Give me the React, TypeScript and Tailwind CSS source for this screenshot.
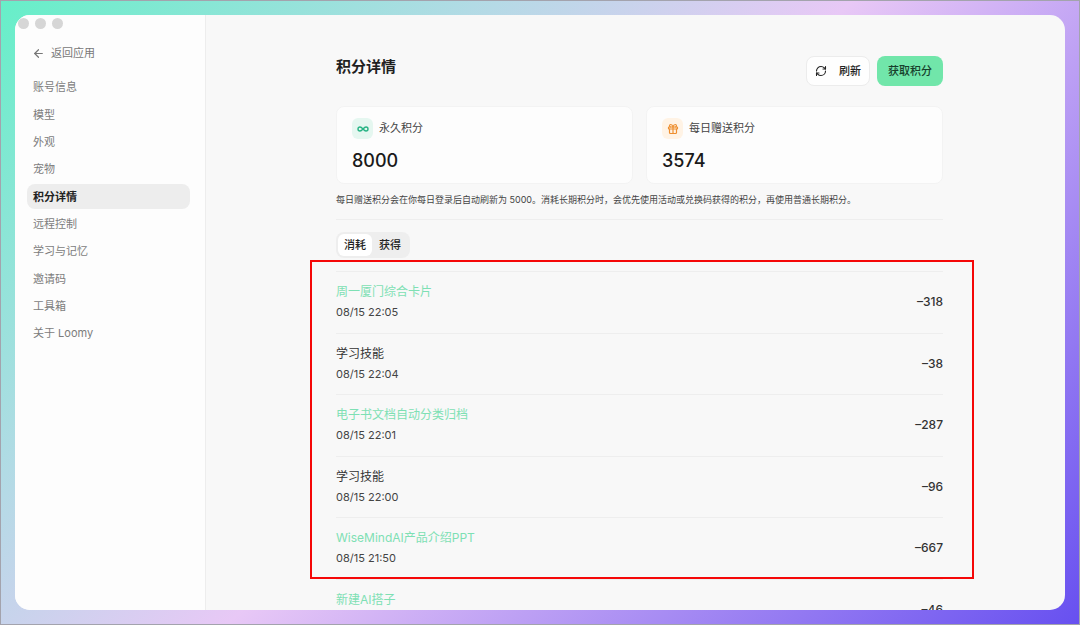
import React, { useState } from 'react';
import { ArrowLeft, Gift, Infinity as InfinityIcon, RefreshCw } from 'lucide-react';

interface PointRecord {
  id: number;
  title: string;
  time?: string;
  amount: string;
  linked: boolean;
}

const NAV_ITEMS = [
  '账号信息',
  '模型',
  '外观',
  '宠物',
  '积分详情',
  '远程控制',
  '学习与记忆',
  '邀请码',
  '工具箱',
  '关于 Loomy',
];

const RECORDS: PointRecord[] = [
  { id: 1, title: '周一厦门综合卡片', time: '08/15 22:05', amount: '–318', linked: true },
  { id: 2, title: '学习技能', time: '08/15 22:04', amount: '–38', linked: false },
  { id: 3, title: '电子书文档自动分类归档', time: '08/15 22:01', amount: '–287', linked: true },
  { id: 4, title: '学习技能', time: '08/15 22:00', amount: '–96', linked: false },
  { id: 5, title: 'WiseMindAI产品介绍PPT', time: '08/15 21:50', amount: '–667', linked: true },
  { id: 6, title: '新建AI搭子', amount: '–46', linked: true },
];

const Sidebar: React.FC = () => {
  const [active, setActive] = useState('积分详情');

  return (
    <aside className="w-[191px] shrink-0 border-r border-[#ededed] bg-[#fdfdfd]">
      <div className="flex gap-1.5 px-[3px] pt-[3px]">
        <span className="size-[11px] rounded-full bg-[#d6d6d6]" />
        <span className="size-[11px] rounded-full bg-[#d6d6d6]" />
        <span className="size-[11px] rounded-full bg-[#d6d6d6]" />
      </div>
      <a href="#" className="mt-4 ml-[17px] flex h-4 w-fit items-center gap-1.5 text-[11px] text-[#777]">
        <ArrowLeft size={13} strokeWidth={2.2} />
        返回应用
      </a>
      <nav className="mt-[14px] mr-[15px] ml-3 flex h-[271px] flex-col justify-between">
        {NAV_ITEMS.map((item) => (
          <button
            key={item}
            onClick={() => setActive(item)}
            className={`h-[25px] rounded-lg px-1.5 text-left text-[11px] ${
              active === item ? 'bg-[#ededed] font-bold text-[#222]' : 'text-[#7c7c7c]'
            }`}
          >
            {item}
          </button>
        ))}
      </nav>
    </aside>
  );
};

interface PointCardProps {
  label: string;
  value: string;
  icon: React.ReactNode;
  iconClass: string;
}

const PointCard: React.FC<PointCardProps> = ({ label, value, icon, iconClass }) => (
  <div className="h-[78px] rounded-lg border border-[#f3f3f3] bg-[#fdfdfd] px-[15px] pt-[11px]">
    <div className="flex items-center gap-1.5 text-[11px] text-[#444]">
      <span className={`flex size-[21px] items-center justify-center rounded-md ${iconClass}`}>{icon}</span>
      {label}
    </div>
    <p className="mt-2.5 text-[18px] leading-6 font-medium text-[#1a1a1a]">{value}</p>
  </div>
);

const App: React.FC = () => {
  const [tab, setTab] = useState<'spent' | 'earned'>('spent');

  return (
    <div className="h-screen border border-[#a3a3ad] bg-[linear-gradient(135deg,#66efc8_0%,#b2dbe5_28%,#e8c8f6_50%,#6750f0_100%)] p-3.5 font-['Inter','Noto_Sans_CJK_SC',sans-serif]">
      <div className="flex h-full overflow-hidden rounded-[15px] bg-[#f8f8f8]">
        <Sidebar />
        <main className="min-w-0 flex-1 overflow-y-auto px-8 [scrollbar-width:none]">
          <div className="mx-auto max-w-[615px] pl-2">
            <header className="flex items-start justify-between pt-[41px]">
              <h1 className="mt-px text-[15px] leading-5 font-semibold text-[#1f1f1f]">积分详情</h1>
              <div className="flex gap-[7px] text-[11px]">
                <button className="flex h-[30px] items-center gap-3 rounded-lg border border-[#ececec] bg-[#fefefe] px-2 font-medium text-[#222]">
                  <RefreshCw size={12} strokeWidth={2.2} />
                  刷新
                </button>
                <button className="h-[30px] rounded-lg bg-[#71e6aa] px-[11px] font-medium text-[#17402c]">
                  获取积分
                </button>
              </div>
            </header>

            <section className="mt-5 grid grid-cols-2 gap-[13px]">
              <PointCard
                label="永久积分"
                value="8000"
                icon={<InfinityIcon size={12} strokeWidth={2.8} />}
                iconClass="bg-[#e5f7f0] text-[#27b384]"
              />
              <PointCard
                label="每日赠送积分"
                value="3574"
                icon={<Gift size={12} strokeWidth={2.4} />}
                iconClass="bg-[#fff3e5] text-[#ee8f30]"
              />
            </section>
            <p className="mt-2 border-b border-[#eee] pb-[11px] text-[9px] leading-4 text-[#444]">
              每日赠送积分会在你每日登录后自动刷新为 5000。消耗长期积分时，会优先使用活动或兑换码获得的积分，再使用普通长期积分。
            </p>

            <div role="tablist" className="mt-3 flex w-fit rounded-lg bg-[#eee] p-0.5 text-[11px] font-medium text-[#222]">
              <button
                role="tab"
                aria-selected={tab === 'spent'}
                onClick={() => setTab('spent')}
                className={`h-[22px] rounded-md px-1.5 ${tab === 'spent' ? 'bg-white' : ''}`}
              >
                消耗
              </button>
              <button
                role="tab"
                aria-selected={tab === 'earned'}
                onClick={() => setTab('earned')}
                className={`h-[22px] rounded-md px-[7px] ${tab === 'earned' ? 'bg-white' : ''}`}
              >
                获得
              </button>
            </div>

            <div className="relative mt-[13px]">
              <ul className="grid min-h-[369px] auto-rows-fr">
                {RECORDS.map((r) => (
                  <li key={r.id} className="flex items-center justify-between border-t border-[#eee]">
                    <div>
                      {r.linked ? (
                        <a href="#" className="block text-[12px] leading-5 text-[#7ee0b4]">{r.title}</a>
                      ) : (
                        <p className="text-[12px] leading-5 text-[#333]">{r.title}</p>
                      )}
                      <time className="block h-5 text-[11px] leading-5 text-[#444]">{r.time}</time>
                    </div>
                    <span className="text-[12px] font-medium text-[#333]">{r.amount}</span>
                  </li>
                ))}
              </ul>
              {/* highlight frame over the latest five records */}
              <div className="pointer-events-none absolute -top-[11px] -right-[31px] -left-[26px] h-[319px] border-2 border-[#f50808]" />
            </div>
          </div>
        </main>
      </div>
    </div>
  );
};

export default App;
